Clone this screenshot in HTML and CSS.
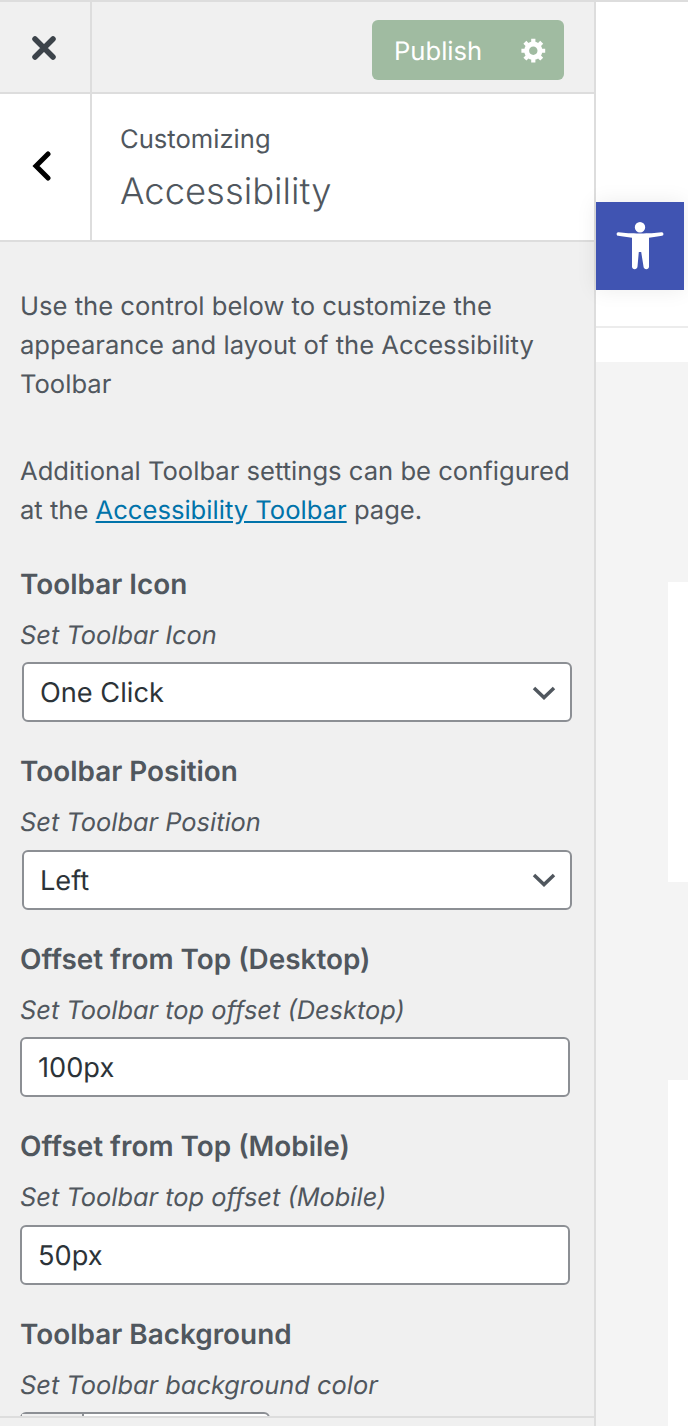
FILE: index.html
```html
<!DOCTYPE html>
<html lang="en">
<head>
<meta charset="utf-8">
<title>Customizing Accessibility</title>
<link rel="stylesheet" href="styles.css">
</head>
<body>
<div class="app">
  <aside class="sidebar">
    <header class="topbar">
      <button class="close" aria-label="Close">
        <svg width="24" height="24" viewBox="0 0 24 24"><path class="close-x" d="M3 3 21 21M21 3 3 21"/></svg>
      </button>
      <div class="topbar-actions">
        <div class="publish">
          <span class="publish-text">Publish</span>
          <svg width="28" height="28" viewBox="0 0 20 20"><path fill="#fff" d="M18 12h-2.18c-.17.7-.44 1.35-.81 1.93l1.54 1.54-2.1 2.1-1.54-1.54c-.58.36-1.23.63-1.91.79V19H8v-2.18c-.68-.16-1.33-.43-1.91-.79l-1.54 1.54-2.12-2.12 1.54-1.54c-.36-.58-.63-1.23-.79-1.91H1V9.03h2.17c.16-.7.44-1.35.8-1.94L2.43 5.55l2.1-2.1 1.54 1.54c.58-.37 1.24-.64 1.93-.81V2h3v2.18c.68.16 1.33.43 1.91.79l1.54-1.54 2.12 2.12-1.54 1.54c.36.59.64 1.24.8 1.94H18V12zm-8.5 1.5c1.66 0 3-1.34 3-3s-1.34-3-3-3-3 1.34-3 3 1.34 3 3 3z"/></svg>
        </div>
      </div>
    </header>
    <div class="section-head">
      <button class="back" aria-label="Back">
        <svg width="20" height="32" viewBox="0 0 20 32"><path class="back-chev" d="M16 3 4 15l12 12"/></svg>
      </button>
      <div class="titles">
        <div class="crumb">Customizing</div>
        <h1 class="title">Accessibility</h1>
      </div>
    </div>
    <main class="panel">
      <p class="intro">Use the control below to customize the appearance and layout of the Accessibility Toolbar</p>
      <p class="intro second">Additional Toolbar settings can be configured at the <a href="#">Accessibility Toolbar</a> page.</p>

      <section class="field first">
        <h2 class="label">Toolbar Icon</h2>
        <div class="desc">Set Toolbar Icon</div>
        <div class="select"><span>One Click</span>
          <svg width="24" height="14" viewBox="0 0 24 14"><path class="chev" d="M2 2l10 9.500L22 2"/></svg>
        </div>
      </section>
      <section class="field">
        <h2 class="label">Toolbar Position</h2>
        <div class="desc">Set Toolbar Position</div>
        <div class="select"><span>Left</span>
          <svg width="24" height="14" viewBox="0 0 24 14"><path class="chev" d="M2 2l10 9.500L22 2"/></svg>
        </div>
      </section>
      <section class="field">
        <h2 class="label">Offset from Top (Desktop)</h2>
        <div class="desc">Set Toolbar top offset (Desktop)</div>
        <div class="input">100px</div>
      </section>
      <section class="field">
        <h2 class="label">Offset from Top (Mobile)</h2>
        <div class="desc">Set Toolbar top offset (Mobile)</div>
        <div class="input">50px</div>
      </section>
      <section class="field">
        <h2 class="label">Toolbar Background</h2>
        <div class="desc">Set Toolbar background color</div>
        <div class="color"><span class="swatch"></span></div>
      </section>
    </main>
    <footer class="footer"></footer>
  </aside>
  <div class="preview">
    <div class="preview-top"></div>
    <div class="preview-strip"></div>
    <div class="preview-body">
      <div class="card one"></div>
      <div class="card two"></div>
    </div>
    <div class="a11y-btn">
      <svg width="48" height="50" viewBox="0 0 48 50"><path fill="#fff" d="M24 0a5.200 5.200 0 1 1 0 10.400A5.200 5.200 0 0 1 24 0ZM2.500 10.200C9 11 15 11.400 24 11.400s15-.4 21.500-1.200c2.300-.3 2.700 3.200.5 3.600-3.800.8-8.600 1.500-13 1.900V44.500c0 3.500-5.200 3.500-5.500 0L25.200 30h-2.400L21.500 44.500c-.3 3.500-5.500 3.500-5.500 0V15.700C11.600 15.300 6.200 14.600 2.200 13.800c-2.200-.4-2-3.900.3-3.600Z"/></svg>
    </div>
  </div>
</div>
</body>
</html>
```
FILE: styles.css
```css
* { box-sizing: border-box; }
html, body { margin: 0; height: 100%; overflow: hidden; }
body { font-family: Inter, "Liberation Sans", sans-serif; background: #fff; color: #50575e; text-rendering: geometricPrecision; }

.app { display: flex; height: 1426px; border-top: 2px solid #ddd; }

.sidebar {
  width: 596px; flex: none; position: relative; display: flex; flex-direction: column;
  background: #f0f0f0; border-right: 2px solid #ddd; overflow: hidden;
}

.topbar { height: 92px; flex: none; display: flex; border-bottom: 2px solid #ddd; }
.close {
  width: 92px; flex: none; padding: 2px 2px 0 0; background: none; border: 0; border-right: 2px solid #ddd;
  display: flex; align-items: center; justify-content: center;
}
.close-x { fill: none; stroke: #3c434a; stroke-width: 5.500; stroke-linecap: round; }
.topbar-actions { flex: 1; display: flex; justify-content: flex-end; align-items: flex-start; padding: 18px 30px 0 0; }
.publish {
  width: 192px; height: 60px; border-radius: 6px; background: #a0bba1; color: #fff;
  display: flex; align-items: center; justify-content: space-between; padding: 0 16px 0 22px;
  font-size: 25.600px;
}
.publish-text { padding-top: 2px; }

.section-head { height: 148px; flex: none; display: flex; background: #fff; border-bottom: 2px solid #ddd; }
.back {
  width: 92px; flex: none; padding: 0 6px 0 0; background: none; border: 0; border-right: 2px solid #ddd;
  display: flex; align-items: center; justify-content: center;
}
.back-chev { fill: none; stroke: #000; stroke-width: 5; stroke-linecap: round; stroke-linejoin: miter; }
.titles { padding: 29px 0 0 28px; }
.crumb { font-size: 25.600px; line-height: 34px; }
.title { margin: 11px 0 0; font-size: 36.400px; line-height: 46px; font-weight: 300; }

.panel { padding: 45px 20px 0; flex: 1; min-height: 0; overflow: hidden; }
.intro { margin: 0; font-size: 25.600px; line-height: 39px; }
.intro.second { margin-top: 48px; }
.intro a { color: #0073aa; text-decoration: underline; }

.field { margin-top: 33.800px; }
.field.first { margin-top: 38.600px; }
.label { margin: 0; font-size: 27.900px; line-height: 30px; font-weight: 600; }
.desc { margin-top: 22px; font-size: 25.400px; line-height: 30px; font-style: italic; }

.select, .input {
  margin-top: 11.700px; height: 60px; background: #fff; border: 2px solid #8c8f94; border-radius: 6px;
  color: #2c3338; font-size: 27.200px; display: flex; align-items: center; padding-top: 1px;
}
.select { width: 550px; margin-left: 2px; padding-left: 16px; padding-right: 14px; justify-content: space-between; }
.input { width: 550px; padding-left: 16px; padding-right: 16px; }
.chev { fill: none; stroke: #50575e; stroke-width: 3.500; }

.color { margin-top: 11.700px; width: 250px; height: 60px; border: 2px solid #8c8f94; border-radius: 6px; background: #fff; }
.swatch { display: block; width: 62px; height: 100%; border-right: 2px solid #8c8f94; background: #f0f0f0; }

.footer { position: absolute; left: 0; right: 0; bottom: 0; height: 10px; background: #f0f0f0; border-top: 2px solid #ddd; }

.preview { flex: 1; position: relative; display: flex; flex-direction: column; }
.preview-top { height: 326px; flex: none; border-bottom: 2px solid #ececec; }
.preview-strip { height: 34px; flex: none; }
.preview-body { flex: 1; background: #f4f4f4; padding-left: 72px; }
.card { background: #fff; }
.card.one { margin-top: 220px; height: 300px; }
.card.two { margin-top: 198px; height: 400px; }

.a11y-btn {
  position: absolute; left: 0; top: 200px; width: 88px; height: 88px; background: #4054b2;
  display: flex; align-items: center; justify-content: center; padding-top: 2px;
  box-shadow: 0 0 20px rgba(0,0,0,.08);
}
```
